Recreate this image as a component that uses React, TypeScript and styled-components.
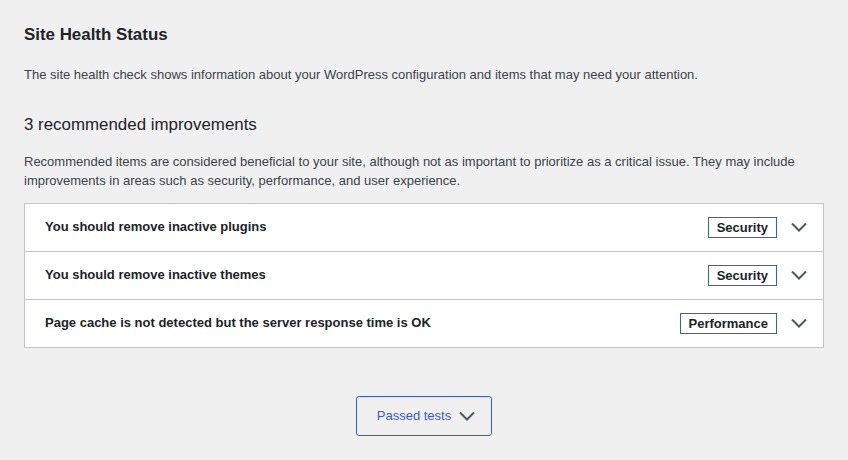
import React from "react";
import styled, { createGlobalStyle } from "styled-components";

const GlobalStyle = createGlobalStyle`
  html, body {
    margin: 0;
    padding: 0;
    background: #f0f0f1;
  }
  body {
    font-family: "Liberation Sans", Arial, sans-serif;
    font-size: 13px;
    color: #3c434a;
  }
  * { box-sizing: border-box; }
`;

const Page = styled.div`
  padding: 23px 24px 0;
`;

const Title = styled.h2`
  margin: 0;
  font-size: 16.9px;
  line-height: 24px;
  font-weight: 700;
  color: #1d2327;
`;

const Intro = styled.p<{ $top: number }>`
  margin: ${(p) => p.$top}px 0 0;
  font-size: 13px;
  line-height: 19.5px;
  color: #3c434a;
`;

const Subtitle = styled.h3`
  margin: 28px 0 0;
  font-size: 16.9px;
  line-height: 24px;
  font-weight: 400;
  color: #1d2327;
`;

const Accordion = styled.div`
  margin-top: 12px;
  border: 1px solid #c3c4c7;
  background: #fff;
`;

const Row = styled.button`
  display: flex;
  align-items: center;
  width: 100%;
  height: 48px;
  padding: 0 16px 0 20px;
  border: 0;
  border-bottom: 1px solid #c3c4c7;
  background: #fff;
  font-family: inherit;
  text-align: left;
  cursor: pointer;
  &:last-child {
    border-bottom: 0;
    height: 47px;
  }
`;

const RowTitle = styled.span`
  flex: 1;
  font-size: 13px;
  font-weight: 700;
  line-height: 19.5px;
  color: #1d2327;
`;

const Badge = styled.span`
  display: inline-block;
  padding: 2px 8px 2px;
  border: 1px solid #3858e9;
  font-size: 13px;
  font-weight: 700;
  line-height: 15px;
  color: #1d2327;
  margin-right: 14px;
`;

const Chevron = styled.svg`
  display: block;
  flex: none;
`;

const PassedWrap = styled.div`
  display: flex;
  justify-content: center;
  margin-top: 48px;
`;

const PassedButton = styled.button`
  display: flex;
  align-items: center;
  gap: 8px;
  height: 40px;
  padding: 0 16px 0 20px;
  border: 1px solid #3858e9;
  border-radius: 3px;
  background: transparent;
  font-family: inherit;
  font-size: 13px;
  color: #3858e9;
  cursor: pointer;
`;

const ChevronIcon = () => (
  <Chevron width="16" height="10" viewBox="0 0 16 10" aria-hidden="true">
    <polyline
      points="1,1.5 8,8.5 15,1.5"
      fill="none"
      stroke="#50575e"
      strokeWidth="2"
    />
  </Chevron>
);

const items = [
  { title: "You should remove inactive plugins", badge: "Security" },
  { title: "You should remove inactive themes", badge: "Security" },
  {
    title: "Page cache is not detected but the server response time is OK",
    badge: "Performance",
  },
];

export default function App() {
  return (
    <>
      <GlobalStyle />
      <Page>
        <Title>Site Health Status</Title>
        <Intro $top={18}>
          The site health check shows information about your WordPress
          configuration and items that may need your attention.
        </Intro>
        <Subtitle>3 recommended improvements</Subtitle>
        <Intro $top={15}>
          Recommended items are considered beneficial to your site, although
          not as important to prioritize as a critical issue. They may include
          improvements in areas such as security, performance, and user
          experience.
        </Intro>
        <Accordion>
          {items.map((it) => (
            <Row key={it.title} type="button">
              <RowTitle>{it.title}</RowTitle>
              <Badge>{it.badge}</Badge>
              <ChevronIcon />
            </Row>
          ))}
        </Accordion>
        <PassedWrap>
          <PassedButton type="button">
            Passed tests
            <ChevronIcon />
          </PassedButton>
        </PassedWrap>
      </Page>
    </>
  );
}
